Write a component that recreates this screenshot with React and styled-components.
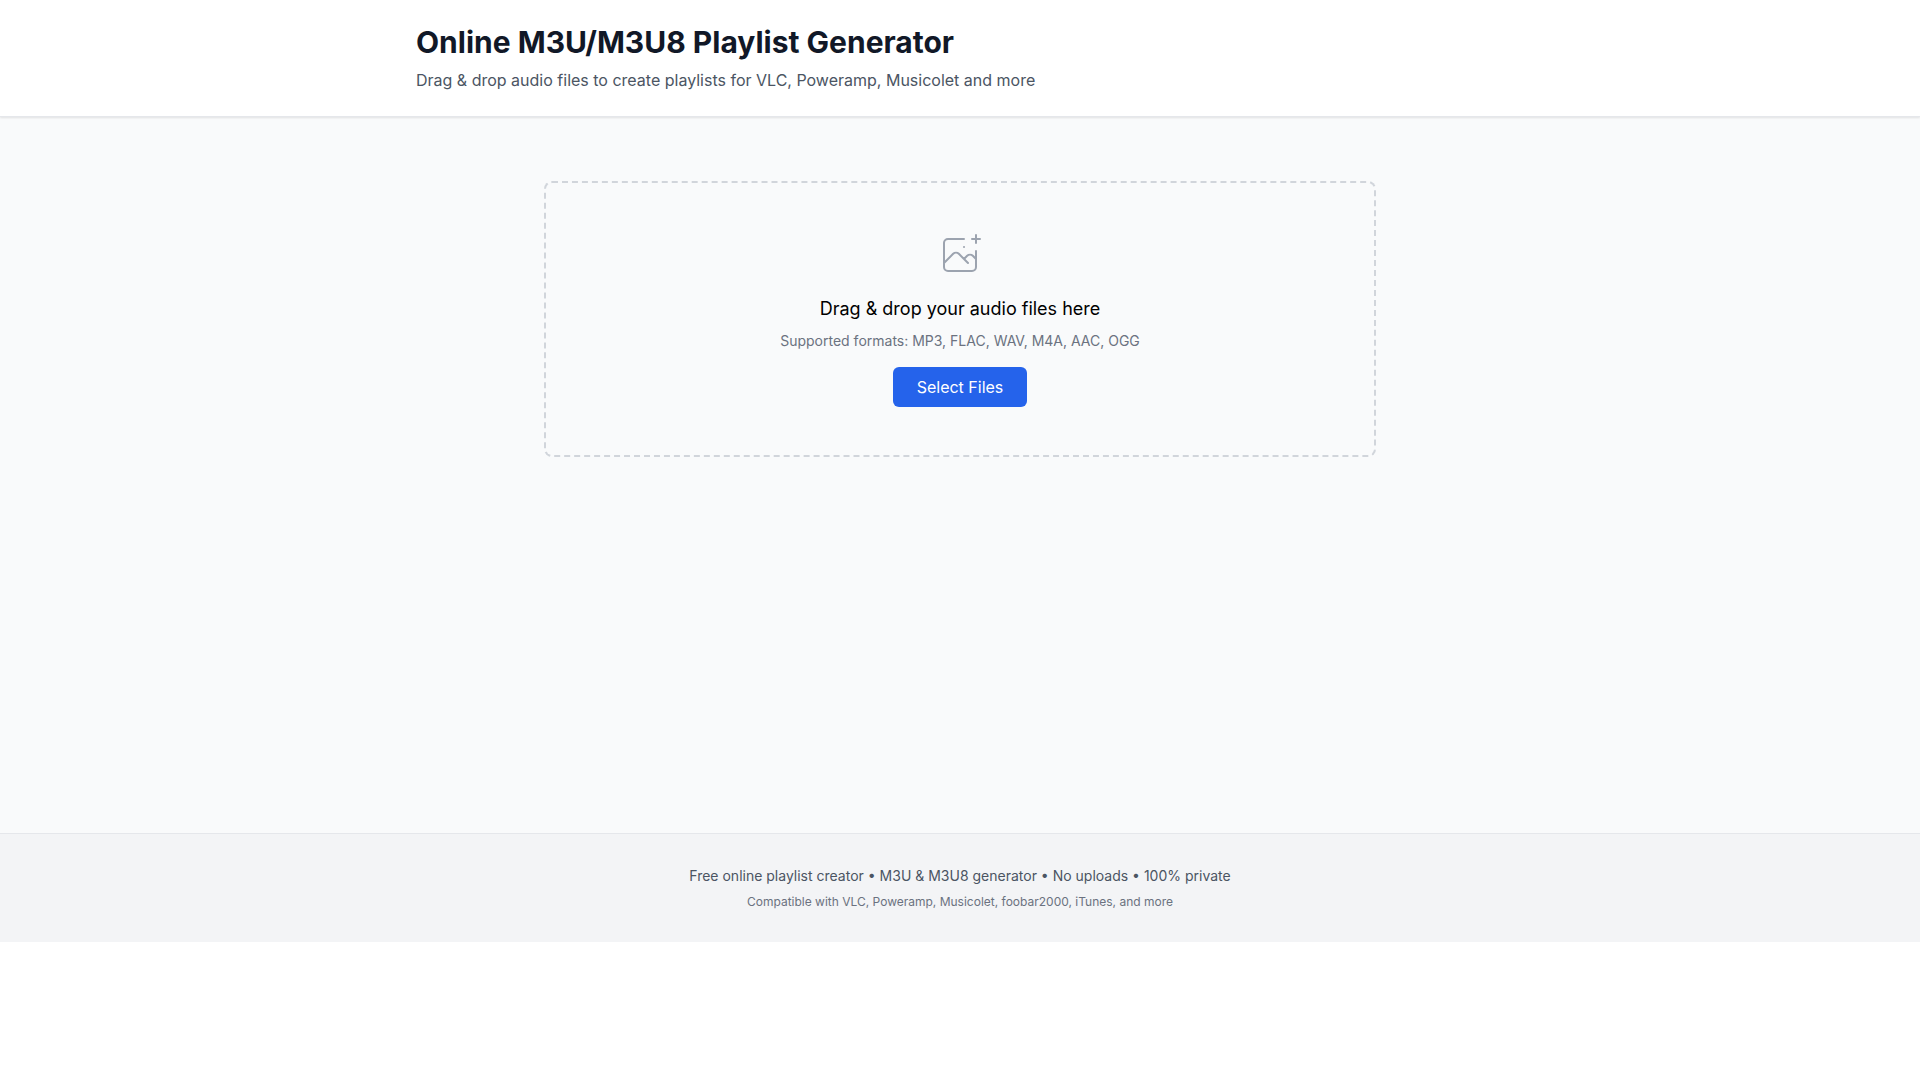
import React, { useRef, useState } from 'react';
import styled, { createGlobalStyle } from 'styled-components';

const GlobalStyle = createGlobalStyle`
  *, *::before, *::after {
    box-sizing: border-box;
  }

  body {
    margin: 0;
    background: #fff;
    color: #000;
    font-family: Inter, "Liberation Sans", sans-serif;
    font-size: 16px;
    font-optical-sizing: none;
    line-height: 24px;
  }

  h1, p {
    margin: 0;
  }
`;

const Page = styled.div`
  background: #f9fafb;
`;

const Header = styled.header`
  position: relative;
  background: #fff;
  border-bottom: 1px solid #e5e7eb;
  box-shadow: 0 1px 2px rgba(0, 0, 0, 0.1);
`;

const HeaderInner = styled.div`
  max-width: 1152px;
  margin: 0 auto;
  padding: 24px 32px;
`;

const Title = styled.h1`
  color: #111827;
  font-size: 30px;
  font-weight: 700;
  line-height: 36px;
`;

const Subtitle = styled.p`
  margin-top: 8px;
  color: #4b5563;
`;

const Main = styled.main`
  max-width: 896px;
  min-height: 716px;
  margin: 0 auto;
  padding: 64px 32px;
`;

const DropZone = styled.section`
  display: flex;
  flex-direction: column;
  align-items: center;
  padding: 48px;
  border: 2px dashed ${props => (props.$active ? '#3b82f6' : '#d1d5db')};
  border-radius: 8px;
  text-align: center;
`;

const DropIcon = styled.svg`
  width: 48px;
  height: 48px;
  color: #9ca3af;
`;

const DropText = styled.p`
  margin-top: 16px;
  font-size: 18px;
  line-height: 28px;
`;

const Formats = styled.p`
  margin-top: 8px;
  color: #6b7280;
  font-size: 14px;
  line-height: 20px;
`;

const SelectButton = styled.button`
  margin-top: 16px;
  padding: 8px 24px;
  border: 0;
  border-radius: 6px;
  background: #2563eb;
  color: #fff;
  font: inherit;
  cursor: pointer;

  &:hover {
    background: #1d4ed8;
  }
`;

const Footer = styled.footer`
  padding: 32px;
  border-top: 1px solid #e5e7eb;
  background: #f3f4f6;
  text-align: center;
`;

const FooterText = styled.p`
  color: #4b5563;
  font-size: 14px;
  line-height: 20px;
`;

const FooterNote = styled.p`
  margin-top: 8px;
  color: #6b7280;
  font-size: 12px;
  line-height: 16px;
`;

const App = () => {
  const [dragging, setDragging] = useState(false);
  const fileInput = useRef(null);

  const handleDragOver = (e) => {
    e.preventDefault();
    setDragging(true);
  };

  const handleDrop = (e) => {
    e.preventDefault();
    setDragging(false);
  };

  return (
    <>
      <GlobalStyle />
      <Page>
        <Header>
          <HeaderInner>
            <Title>Online M3U/M3U8 Playlist Generator</Title>
            <Subtitle>
              Drag &amp; drop audio files to create playlists for VLC, Poweramp, Musicolet and more
            </Subtitle>
          </HeaderInner>
        </Header>

        <Main>
          <DropZone
            $active={dragging}
            onDragOver={handleDragOver}
            onDragLeave={() => setDragging(false)}
            onDrop={handleDrop}
          >
            <DropIcon viewBox="0 0 48 48" fill="none" stroke="currentColor" aria-hidden="true">
              <path
                d="M28 8H12a4 4 0 00-4 4v20m32-12v8m0 0v8a4 4 0 01-4 4H12a4 4 0 01-4-4v-4m32-4l-3.172-3.172a4 4 0 00-5.656 0L28 28M8 32l9.172-9.172a4 4 0 015.656 0L28 28m0 0l4 4m4-24h8m-4-4v8m-12 4h.02"
                strokeWidth="2"
                strokeLinecap="round"
                strokeLinejoin="round"
              />
            </DropIcon>
            <DropText>Drag &amp; drop your audio files here</DropText>
            <Formats>Supported formats: MP3, FLAC, WAV, M4A, AAC, OGG</Formats>
            <SelectButton type="button" onClick={() => fileInput.current.click()}>
              Select Files
            </SelectButton>
            <input
              ref={fileInput}
              type="file"
              accept="audio/*"
              aria-label="Audio files"
              multiple
              hidden
            />
          </DropZone>
        </Main>

        <Footer>
          <FooterText>
            Free online playlist creator • M3U &amp; M3U8 generator • No uploads • 100% private
          </FooterText>
          <FooterNote>
            Compatible with VLC, Poweramp, Musicolet, foobar2000, iTunes, and more
          </FooterNote>
        </Footer>
      </Page>
    </>
  );
};

export default App;
